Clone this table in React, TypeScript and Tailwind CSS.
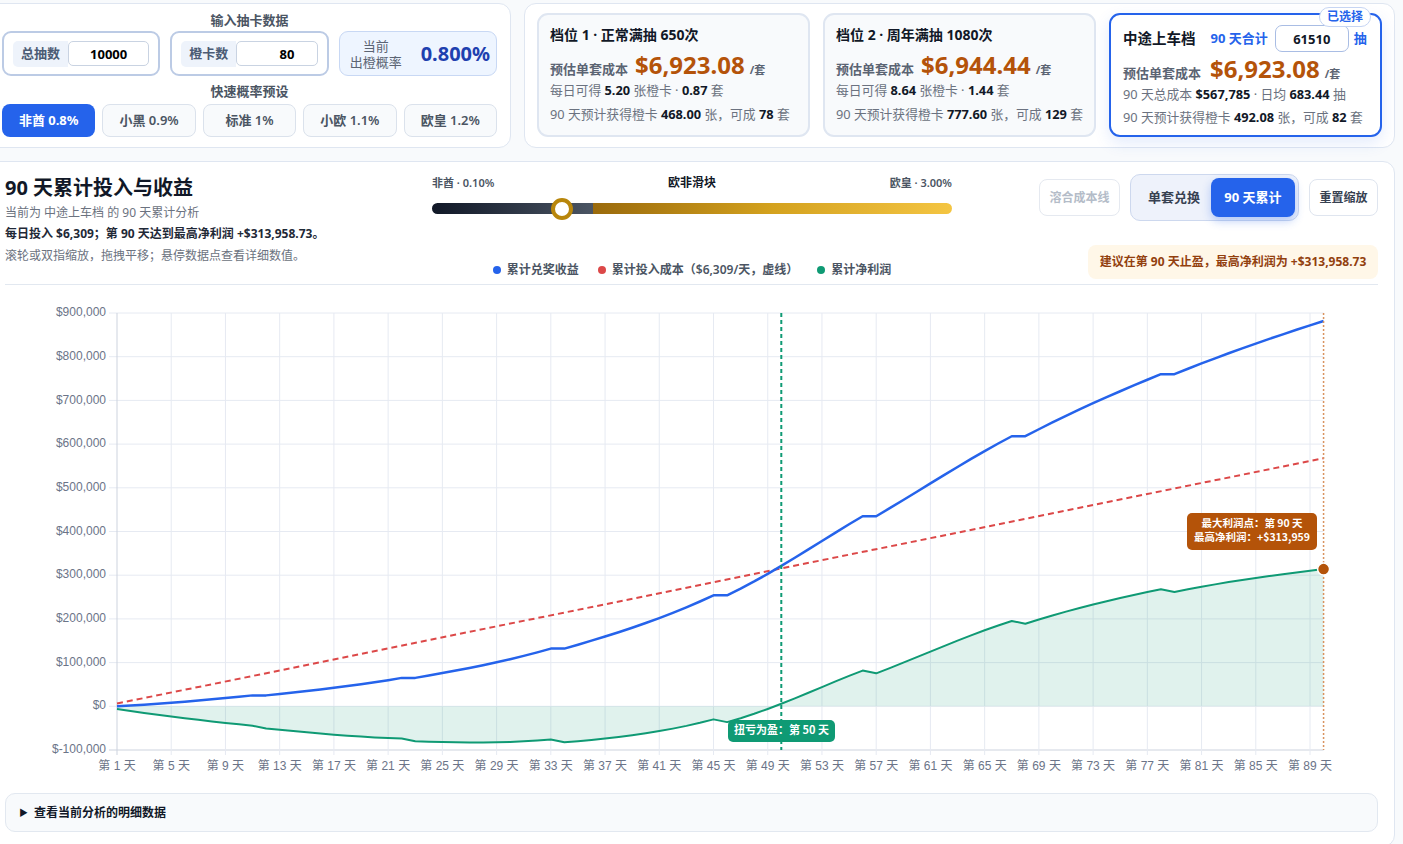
import React from "react";

const COST_DAY = 567785 / 90;
const segs: [number, number, number, number][] = [
  [1, 11, 0, 25000],
  [12, 22, 25000, 65000],
  [23, 33, 65000, 132000],
  [34, 45, 132000, 254000],
  [46, 56, 254000, 435000],
  [57, 67, 435000, 618000],
  [68, 78, 618000, 760000],
  [79, 90, 760000, 881743.73],
];

function buildRevenue(): number[] {
  const rev: number[] = new Array(91).fill(0);
  const m = segs.map(([d0, d1, v0, v1]) => (v1 - v0) / (d1 - d0));
  segs.forEach(([d0, d1, v0, v1], i) => {
    const h = d1 - d0;
    const t0 = i === 0 ? m[0] * 0.7 : (m[i - 1] + m[i]) / 2;
    const t1 = i === segs.length - 1 ? m[i] * 0.9 : (m[i] + m[i + 1]) / 2;
    for (let d = d0; d <= d1; d++) {
      const t = (d - d0) / h;
      const h00 = 2 * t * t * t - 3 * t * t + 1;
      const h10 = t * t * t - 2 * t * t + t;
      const h01 = -2 * t * t * t + 3 * t * t;
      const h11 = t * t * t - t * t;
      rev[d] = h00 * v0 + h10 * h * t0 + h01 * v1 + h11 * h * t1;
    }
  });
  return rev;
}

const REV = buildRevenue();
const X = (d: number) => 112 + (d - 1) * 13.557;
const Y = (v: number) => 421.3 - v * 0.000437;

function Chart() {
  const days = Array.from({ length: 90 }, (_, i) => i + 1);
  const revPts = days.map((d) => `${X(d).toFixed(2)},${Y(REV[d]).toFixed(2)}`).join(" ");
  const profPts = days.map((d) => `${X(d).toFixed(2)},${Y(REV[d] - COST_DAY * d).toFixed(2)}`).join(" ");
  const areaPts = `${X(1)},${Y(0)} ${profPts} ${X(90)},${Y(0)}`;
  const yTicks = Array.from({ length: 11 }, (_, i) => -100000 + i * 100000);
  const xTicks = Array.from({ length: 23 }, (_, i) => 1 + i * 4);
  const x0 = X(1);
  const x90 = X(90);
  const top = Y(900000);
  const bottom = Y(-100000);
  const be = X(50);
  const maxY = Y(313958.73);
  return (
    <svg width={1373} height={500} className="block font-['Liberation_Sans','Noto_Sans_CJK_SC',sans-serif]">
      {yTicks.map((v) => (
        <g key={v}>
          <line x1={x0 - 8} x2={x90} y1={Y(v)} y2={Y(v)} stroke={v === -100000 ? "#cdd3de" : "#e6eaf2"} strokeWidth={1} />
          <text x={x0 - 11} y={Y(v)} textAnchor="end" dominantBaseline="middle" fontSize={12} fill="#6b7488">
            {"$" + v.toLocaleString("en-US")}
          </text>
        </g>
      ))}
      {xTicks.map((d) => (
        <g key={d}>
          <line x1={X(d)} x2={X(d)} y1={top} y2={bottom + 5} stroke={d === 1 ? "#cdd3de" : "#e6eaf2"} strokeWidth={1} />
          <text x={X(d)} y={482} textAnchor="middle" dominantBaseline="middle" fontSize={12} fill="#6b7488">
            {`第 ${d} 天`}
          </text>
        </g>
      ))}
      <polygon points={areaPts} fill="rgba(15,154,116,0.13)" />
      <line x1={X(1)} y1={Y(COST_DAY)} x2={X(90)} y2={Y(COST_DAY * 90)} stroke="#dc4848" strokeWidth={2} strokeDasharray="6 4" />
      <polyline points={revPts} fill="none" stroke="#2563eb" strokeWidth={2.5} strokeLinejoin="round" />
      <polyline points={profPts} fill="none" stroke="#0f9a74" strokeWidth={2} strokeLinejoin="round" />
      <line x1={be} x2={be} y1={top} y2={bottom} stroke="#0f9a74" strokeWidth={2} strokeDasharray="4 3" />
      <line x1={x90} x2={x90} y1={top} y2={bottom} stroke="#d9935f" strokeWidth={1.5} strokeDasharray="2 2" />
      <circle cx={x90} cy={maxY} r={6} fill="#b45309" stroke="#fff" strokeWidth={1.5} />
      <rect x={723} y={435} width={107} height={22} rx={5} fill="#0f9a74" />
      <text x={776.5} y={446.5} textAnchor="middle" dominantBaseline="middle" fontSize={11} fontWeight={700} fill="#fff" className="font-['Noto_Sans_CJK_SC',sans-serif]">
        扭亏为盈：第 50 天
      </text>
      <rect x={1182} y={228} width={130} height={37} rx={5} fill="#b45309" />
      <text x={1247} y={239.5} textAnchor="middle" dominantBaseline="middle" fontSize={10.5} fontWeight={700} fill="#fff" className="font-['Noto_Sans_CJK_SC',sans-serif]">
        最大利润点：第 90 天
      </text>
      <text x={1247} y={253.5} textAnchor="middle" dominantBaseline="middle" fontSize={10.5} fontWeight={700} fill="#fff" className="font-['Noto_Sans_CJK_SC',sans-serif]">
        最高净利润：+$313,959
      </text>
    </svg>
  );
}

function B({ children }: { children: React.ReactNode }) {
  return <span className="font-bold text-[#111827]">{children}</span>;
}

function Card({ title, cost, l3, l4 }: { title: string; cost: string; l3: React.ReactNode; l4: React.ReactNode }) {
  return (
    <div className="rounded-[11px] border-2 border-[#dfe6f1] bg-[#f8fafc] pl-[11px] pr-[4px] pt-[10px]">
      <div className="text-[14px] font-bold leading-5 text-[#111827]">{title}</div>
      <div className="mt-[8px] flex items-baseline leading-none">
        <span className="text-[13px] font-semibold text-[#5b6473]">预估单套成本</span>
        <span className="ml-[7px] text-[24px] font-bold text-[#b45309]">{cost}</span>
        <span className="ml-[5px] text-[11px] font-bold text-[#5b6473]">/套</span>
      </div>
      <div className="mt-[4px] whitespace-nowrap text-[12.8px] leading-[18px] text-[#6b7280]">{l3}</div>
      <div className="mt-[6px] whitespace-nowrap text-[12.8px] leading-[18px] text-[#6b7280]">{l4}</div>
    </div>
  );
}

export default function App() {
  const presets = ["非酋 0.8%", "小黑 0.9%", "标准 1%", "小欧 1.1%", "欧皇 1.2%"];
  return (
    <div className="min-h-screen overflow-hidden bg-[#f8fafc] font-['Noto_Sans','Noto_Sans_CJK_SC',sans-serif]">
      <div className="ml-[-12px] w-[1407px] pt-[3px]">
        <div className="flex gap-[13px]">
          {/* left panel */}
          <div className="w-[523px] rounded-[12px] border border-[#dfe6f1] bg-white px-[13px] pt-[8px] pb-[10px]">
            <div className="text-center text-[13px] font-bold leading-4 text-[#4b5563]">输入抽卡数据</div>
            <div className="mt-[3px] grid grid-cols-3 gap-[10px]">
              {[
                ["总抽数", "10000", "text-center"],
                ["橙卡数", "80", "text-center pl-[20px]"],
              ].map(([l, v, c]) => (
                <div key={l} className="flex h-[45px] items-center rounded-[9px] border-2 border-[#bccbe5] px-[9px]">
                  <div className="flex h-[26px] w-[55px] items-center justify-center rounded-l-[5px] bg-[#eef3fb] text-[13px] font-semibold text-[#4b5b74]">
                    {l}
                  </div>
                  <input
                    readOnly
                    value={v}
                    className={`h-[25px] min-w-0 flex-1 rounded-[5px] border border-[#c9d3e2] bg-white text-[13px] font-bold text-black outline-none ${c}`}
                  />
                </div>
              ))}
              <div className="flex h-[45px] items-center rounded-[9px] border border-[#c8d8f4] bg-[#eef5ff] pl-[9px]">
                <div className="w-[54px] text-center text-[13px] leading-[16px] text-[#5b6473]">
                  当前
                  <br />
                  出橙概率
                </div>
                <div className="ml-[18px] text-[20px] font-bold text-[#1e40af]">0.800%</div>
              </div>
            </div>
            <div className="mt-[7px] text-center text-[13px] font-bold leading-4 text-[#4b5563]">快速概率预设</div>
            <div className="mt-[5px] grid grid-cols-5 gap-[7px]">
              {presets.map((p, i) => (
                <button
                  key={p}
                  className={
                    i === 0
                      ? "h-[33px] rounded-[8px] bg-[#2563eb] text-[13px] font-bold text-white"
                      : "h-[33px] rounded-[8px] border border-[#dbe2ec] bg-[#f8fafc] text-[13px] font-semibold text-[#4b5563]"
                  }
                >
                  {p}
                </button>
              ))}
            </div>
          </div>
          {/* right panel */}
          <div className="flex-1 rounded-[12px] border border-[#dfe6f1] bg-white px-3 pt-[9px] pb-[10px]">
            <div className="grid h-[124px] grid-cols-3 gap-[13px]">
              <Card
                title="档位 1 · 正常满抽 650次"
                cost="$6,923.08"
                l3={<>每日可得 <B>5.20</B> 张橙卡 · <B>0.87</B> 套</>}
                l4={<>90 天预计获得橙卡 <B>468.00</B> 张，可成 <B>78</B> 套</>}
              />
              <Card
                title="档位 2 · 周年满抽 1080次"
                cost="$6,944.44"
                l3={<>每日可得 <B>8.64</B> 张橙卡 · <B>1.44</B> 套</>}
                l4={<>90 天预计获得橙卡 <B>777.60</B> 张，可成 <B>129</B> 套</>}
              />
              <div className="relative rounded-[11px] border-2 border-[#2563eb] bg-white pl-[12px] pr-[4px] pt-[10px] shadow-[0_6px_16px_rgba(37,99,235,0.13)]">
                <div className="absolute -top-[8px] right-[9px] flex h-[20px] items-center rounded-full border border-[#c6d5f3] bg-white px-[7px] text-[12px] font-bold text-[#2563eb]">
                  已选择
                </div>
                <div className="flex h-[27px] items-center">
                  <span className="text-[14.5px] font-bold text-[#111827]">中途上车档</span>
                  <span className="ml-[15px] text-[13px] font-bold text-[#2563eb]">90 天合计</span>
                  <input
                    readOnly
                    value="61510"
                    className="ml-[7px] h-[27px] w-[74px] rounded-[7px] border border-[#a9bde4] bg-white text-center text-[13px] font-bold text-[#111827] outline-none"
                  />
                  <span className="ml-[5px] text-[13px] font-bold text-[#2563eb]">抽</span>
                </div>
                <div className="mt-[5px] flex items-baseline leading-none">
                  <span className="text-[13px] font-semibold text-[#5b6473]">预估单套成本</span>
                  <span className="ml-[9px] text-[24px] font-bold text-[#b45309]">$6,923.08</span>
                  <span className="ml-[5px] text-[11px] font-bold text-[#5b6473]">/套</span>
                </div>
                <div className="mt-[4px] whitespace-nowrap text-[12.8px] leading-[18px] text-[#6b7280]">
                  90 天总成本 <B>$567,785</B> · 日均 <B>683.44</B> 抽
                </div>
                <div className="mt-[5px] whitespace-nowrap text-[12.8px] leading-[18px] text-[#6b7280]">
                  90 天预计获得橙卡 <B>492.08</B> 张，可成 <B>82</B> 套
                </div>
              </div>
            </div>
          </div>
        </div>

        {/* chart panel */}
        <div className="mt-[13px] rounded-[12px] border border-[#dfe6f1] bg-white px-[16px] pb-[14px]">
          <div className="grid grid-cols-[427px_520px_1fr] border-b border-[#e2e8f0] pt-[12px] pb-[5px]">
            <div>
              <div className="text-[20px] font-bold leading-[28px] text-[#111827]">90 天累计投入与收益</div>
              <div className="mt-[2px] text-[12px] leading-[18px] text-[#6b7280]">当前为 中途上车档 的 90 天累计分析</div>
              <div className="mt-[3px] text-[12px] font-bold leading-[18px] text-[#1f2937]">
                每日投入 $6,309；第 90 天达到最高净利润 +$313,958.73。
              </div>
              <div className="mt-[4px] text-[12px] leading-[18px] text-[#6b7280]">滚轮或双指缩放，拖拽平移；悬停数据点查看详细数值。</div>
            </div>
            <div className="flex h-[105px] flex-col pt-[1px]">
              <div className="flex items-center justify-between leading-4">
                <span className="text-[11px] font-semibold text-[#4b5563]">非酋 · 0.10%</span>
                <span className="text-[12px] font-bold text-[#111827]">欧非滑块</span>
                <span className="text-[11px] font-semibold text-[#4b5563]">欧皇 · 3.00%</span>
              </div>
              <div className="relative mt-[12px] h-[11px]">
                <div className="flex h-[11px] overflow-hidden rounded-full">
                  <div className="h-full w-[161px] bg-gradient-to-r from-[#111827] to-[#4b5563]" />
                  <div className="h-full flex-1 bg-gradient-to-r from-[#9a6a0c] via-[#d4a21e] to-[#f4c542]" />
                </div>
                <div className="absolute left-[119px] top-[-5.5px] h-[22px] w-[22px] rounded-full border-[4px] border-[#b8860b] bg-white" />
              </div>
              <div className="mt-auto flex items-center justify-center gap-[19px] text-[12px] font-semibold leading-[18px] text-[#4b5563]">
                <span className="flex items-center gap-[6px]">
                  <span className="h-2 w-2 rounded-full bg-[#2563eb]" />
                  累计兑奖收益
                </span>
                <span className="flex items-center gap-[6px]">
                  <span className="h-2 w-2 rounded-full bg-[#dc4848]" />
                  累计投入成本（$6,309/天，虚线）
                </span>
                <span className="flex items-center gap-[6px]">
                  <span className="h-2 w-2 rounded-full bg-[#0f9a74]" />
                  累计净利润
                </span>
              </div>
            </div>
            <div className="flex flex-col items-end">
              <div className="flex items-center gap-[10px]">
                <button className="h-[37px] w-[81px] rounded-[8px] border border-[#e5e9f0] bg-white text-[12px] font-bold text-[#b4bcc8]">
                  溶合成本线
                </button>
                <div className="flex h-[47px] w-[169px] items-center rounded-[10px] border border-[#cdd8ee] bg-[#eef2fb] pl-[17px] pr-[3px]">
                  <span className="text-[13px] font-bold text-[#374151]">单套兑换</span>
                  <button className="ml-auto h-[39px] w-[84px] rounded-[8px] bg-[#2563eb] text-[13px] font-bold text-white shadow-[0_4px_10px_rgba(37,99,235,0.3)]">
                    90 天累计
                  </button>
                </div>
                <button className="h-[37px] w-[69px] rounded-[8px] border border-[#dfe5ef] bg-white text-[12px] font-bold text-[#374151]">
                  重置缩放
                </button>
              </div>
              <div className="mt-[24px] flex h-[34px] w-[290px] items-center justify-center rounded-[8px] bg-[#fff7e8] text-[12px] font-bold text-[#92400e]">
                建议在第 90 天止盈，最高净利润为 +$313,958.73
              </div>
            </div>
          </div>
          <Chart />
          <div className="mt-[8px] flex h-[39px] items-center rounded-[10px] border border-[#e2e8f0] bg-[#f8fafc] px-[13px]">
            <span className="text-[9px] text-[#111827]">▶</span>
            <span className="ml-[6px] text-[12px] font-bold text-[#111827]">查看当前分析的明细数据</span>
          </div>
        </div>
      </div>
    </div>
  );
}
